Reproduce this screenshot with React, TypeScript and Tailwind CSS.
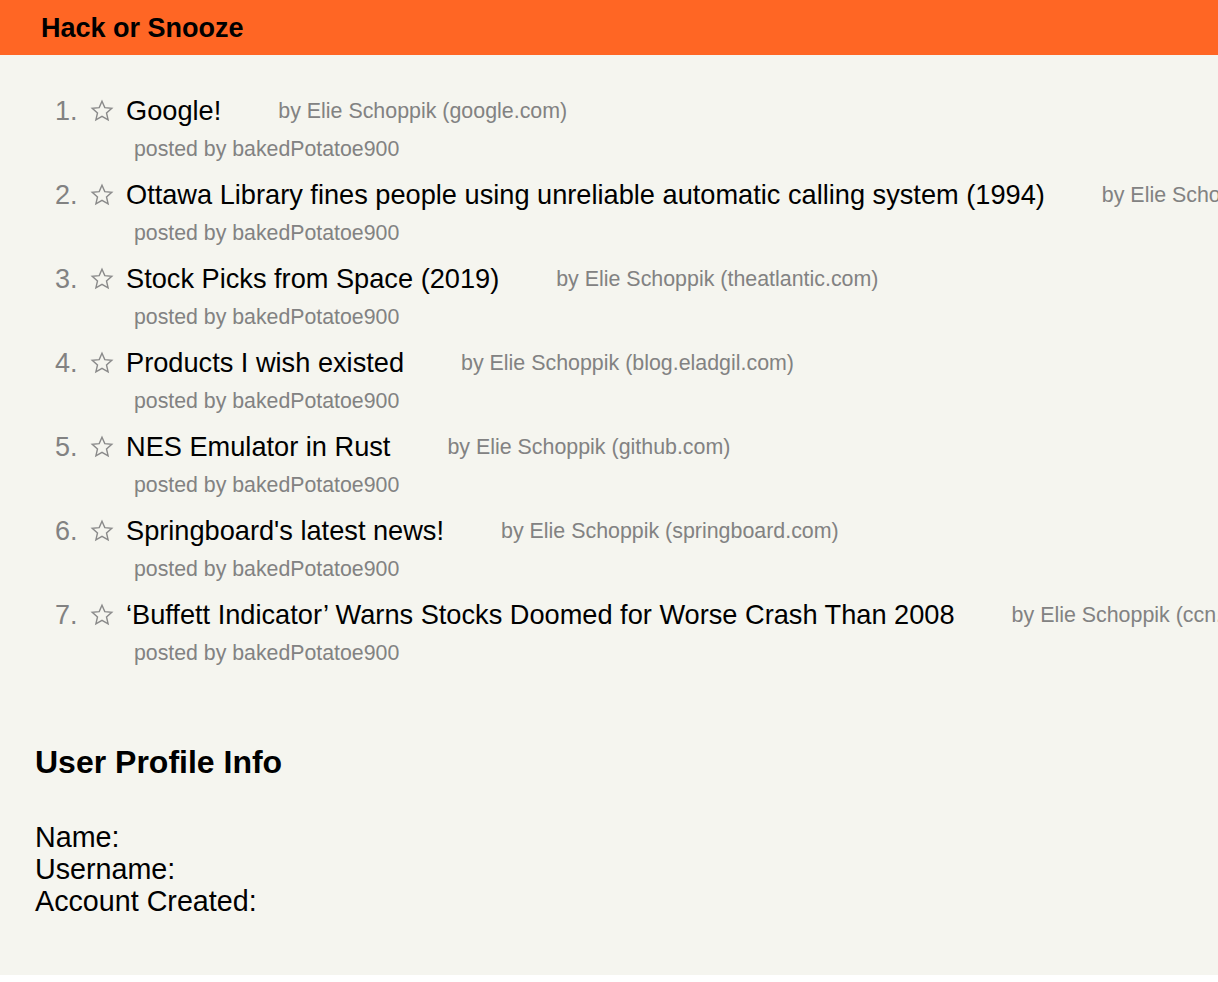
import React from 'react';

interface Story {
  title: string;
  host: string;
}

const stories: Story[] = [
  { title: 'Google!', host: 'google.com' },
  { title: 'Ottawa Library fines people using unreliable automatic calling system (1994)', host: 'cbc.ca' },
  { title: 'Stock Picks from Space (2019)', host: 'theatlantic.com' },
  { title: 'Products I wish existed', host: 'blog.eladgil.com' },
  { title: 'NES Emulator in Rust', host: 'github.com' },
  { title: "Springboard's latest news!", host: 'springboard.com' },
  { title: '\u2018Buffett Indicator\u2019 Warns Stocks Doomed for Worse Crash Than 2008', host: 'ccn.com' },
];

function StarIcon() {
  return (
    <svg width="24" height="24" viewBox="0 0 24 24" className="shrink-0">
      <polygon
        points="12,2.2 14.8,8.6 21.8,9.3 16.5,14 18.1,20.9 12,17.3 5.9,20.9 7.5,14 2.2,9.3 9.2,8.6"
        fill="none"
        stroke="#8a8a8a"
        strokeWidth="1.4"
        strokeLinejoin="miter"
      />
    </svg>
  );
}

export default function App() {
  return (
    <div
      className="h-[975px] w-full overflow-hidden bg-[#f5f5ef] text-black"
      style={{ fontFamily: '"Liberation Sans", Arial, sans-serif' }}
    >
      {/* Nav */}
      <nav className="h-[55px] bg-[#ff6624] flex items-center pl-[41px] pt-[2px]">
        <span className="text-[27px] font-bold leading-none">Hack or Snooze</span>
      </nav>

      {/* Stories */}
      <ol className="pt-[40px] pl-[55px]">
        {stories.map((s, i) => (
          <li key={i} className="mb-[18px]">
            <div className="flex items-center h-[32px] whitespace-nowrap">
              <span className="w-[35px] shrink-0 text-[27px] text-[#828282]">{i + 1}.</span>
              <StarIcon />
              <span className="ml-[12px] shrink-0 text-[27.2px]">{s.title}</span>
              <span className="ml-[57px] shrink-0 text-[21.4px] text-[#828282]">
                by Elie Schoppik ({s.host})
              </span>
            </div>
            <div className="mt-[10px] pl-[79px] h-[24px] leading-[24px] text-[21.3px] text-[#828282] whitespace-nowrap">
              posted by bakedPotatoe900
            </div>
          </li>
        ))}
      </ol>

      {/* Profile */}
      <section className="pl-[35px] mt-[79px]">
        <h2 className="text-[32px] font-bold leading-[36px]">User Profile Info</h2>
        <div className="mt-[41px] text-[28.7px] leading-[32px]">
          <div>Name:</div>
          <div>Username:</div>
          <div>Account Created:</div>
        </div>
      </section>
    </div>
  );
}
